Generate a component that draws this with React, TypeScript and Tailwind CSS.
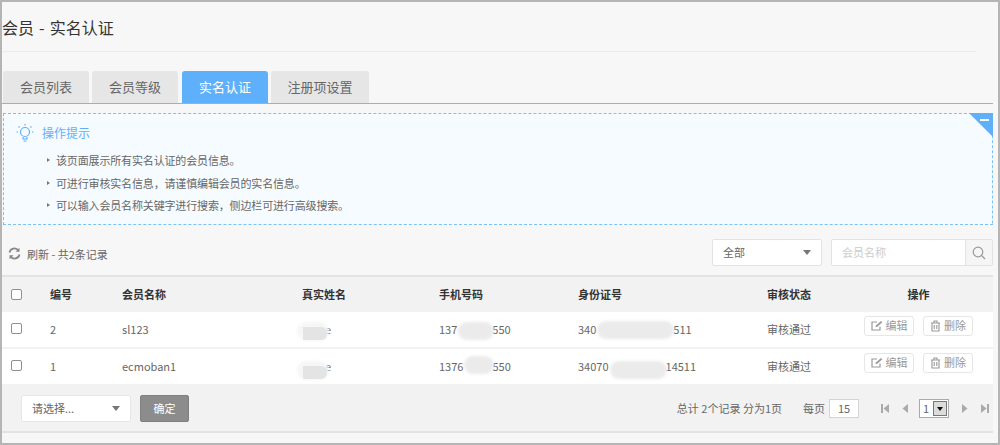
const font = { fontFamily: '"Noto Sans CJK SC", "Noto Sans", sans-serif' };

function Mask({ className }: { className: string }) {
  return <span className={`absolute rounded-full bg-[#ebebeb] blur-[1.5px] ${className}`} />;
}

function NameMask({ top }: { top: string }) {
  return (
    <span className={`absolute -left-[5px] w-[32px] h-[19px] ${top}`}>
      <span className="absolute inset-0 rounded-full bg-[#f6f6f6] blur-[1.5px]" />
      <span className="absolute left-[6px] top-[5px] w-[24px] h-[13px] rounded-r-[6px] bg-[#e4e4e4] blur-[0.5px]" />
    </span>
  );
}

function Cb() {
  return <span className="block w-[11px] h-[11px] rounded-[2px] border border-[#8f8f8f] bg-white" />;
}

function EditIcon() {
  return (
    <svg width="12" height="11" viewBox="0 0 12 11" fill="none" stroke="#999" strokeWidth="1.2">
      <path d="M9 6.5V10H1V2h5" />
      <path d="M4.5 7.2l.4-1.8L10 .9l1.3 1.3-5 4.6z" fill="#999" stroke="none" />
    </svg>
  );
}

function TrashIcon() {
  return (
    <svg width="11" height="12" viewBox="0 0 11 12" fill="none" stroke="#999" strokeWidth="1.1">
      <path d="M1 3h9M4 3V1h3v2M2 3v8h7V3M4.2 5v4M6.8 5v4" />
    </svg>
  );
}

function OpBtn({ icon, label }: { icon: React.ReactNode; label: string }) {
  return (
    <span className="flex items-center justify-center gap-[3px] w-[50px] h-[20px] bg-white border border-[#e6e6e6] rounded-[3px] text-[11px] text-[#999]">
      {icon}
      {label}
    </span>
  );
}

function Row({ id, name, blurName, phone, card }: { id: string; name: string; blurName: React.ReactNode; phone: React.ReactNode; card: React.ReactNode }) {
  return (
    <div className="grid grid-cols-[48px_72px_180px_137px_139px_189px_97px_1fr] items-center h-[37px] bg-white border-b-2 border-[#f2f2f2] text-[11px] text-[#666]">
      <div className="pl-[9px] -mt-[3px]"><Cb /></div>
      <div>{id}</div>
      <div>{name}</div>
      <div className="relative">{blurName}</div>
      <div className="relative">{phone}</div>
      <div className="relative">{card}</div>
      <div>审核通过</div>
      <div className="flex gap-[9px] -mt-[8px]">
        <OpBtn icon={<EditIcon />} label="编辑" />
        <OpBtn icon={<TrashIcon />} label="删除" />
      </div>
    </div>
  );
}

function Tri({ d }: { d: string }) {
  return (
    <svg className="block" width="11" height="11" viewBox="0 0 11 11" fill="#aaa"><path d={d} /></svg>
  );
}

const tips = [
  "该页面展示所有实名认证的会员信息。",
  "可进行审核实名信息，请谨慎编辑会员的实名信息。",
  "可以输入会员名称关键字进行搜索，侧边栏可进行高级搜索。",
];

export default function App() {
  return (
    <div style={font} className="w-[1000px] h-[445px] overflow-hidden border-2 border-[#b5b5b5] bg-[#f7f7f7] text-[#666]">
      <div className="w-[974px] h-[50px] border-b border-[#ebebeb] flex items-center">
        <h1 className="text-[16px] text-[#333] whitespace-pre [word-spacing:1.5px]">会员 - 实名认证</h1>
      </div>
      <div className="w-[991px] mt-[19px] h-[33px] flex gap-[3px] pl-[1px] border-b border-[#7db9ee]">
        {["会员列表", "会员等级", "实名认证", "注册项设置"].map((t, i) => (
          <div
            key={t}
            className={`h-[32px] flex items-center justify-center rounded-t-[3px] text-[13px] ${
              i === 2 ? "bg-[#5fb0fb] text-white ml-[1px]" : "bg-[#e6e6e6] text-[#666]"
            } ${i === 3 ? "w-[98px]" : "w-[86px]"}`}
          >
            {t}
          </div>
        ))}
      </div>
      <div className="relative ml-[1px] w-[990px] h-[112px] mt-[9px] bg-[#f6fbff] border border-dashed border-[#7cc0f8] rounded-tr-[3px] pl-[12px] pt-[9px]">
        <div className="absolute -right-[1px] -top-[1px] w-0 h-0 border-l-[24px] border-l-transparent border-t-[24px] border-t-[#5fb0fb]" />
        <div className="absolute right-[3px] top-[5px] w-[9px] h-[2px] bg-white" />
        <div className="flex items-center gap-[8px] text-[12px] text-[#5fb0fb] h-[20px]">
          <svg width="18" height="20" viewBox="0 0 18 20" fill="none" stroke="#5fb0fb" strokeWidth="1.2">
            <circle cx="9" cy="9" r="4.5" />
            <path d="M7 14v2h4v-2M7.5 18h3M9 1v1.5M2.5 3.5l1 1M15.5 3.5l-1 1M0.5 9H2M16 9h1.5" />
          </svg>
          操作提示
        </div>
        <ul className="mt-[6px] text-[11px] text-[#666] tracking-[-0.15px]">
          {tips.map((t) => (
            <li key={t} className="flex items-center h-[22.5px] pl-[31px] relative">
              <span className="absolute left-[31px] top-[9px] w-0 h-0 border-l-[3px] border-l-[#777] border-y-[2.5px] border-y-transparent" />
              <span className="ml-[9px]">{t}</span>
            </li>
          ))}
        </ul>
      </div>
      <div className="w-[991px] h-[27px] mt-[14px] flex items-center text-[11px]">
        <svg className="ml-[6px] mt-[2px]" width="13" height="13" viewBox="0 0 13 13" fill="none" stroke="#888" strokeWidth="1.8">
          <path d="M1.5 5.5A5 5 0 0 1 10.5 3.5M11.5 7.5A5 5 0 0 1 2.5 9.5" />
          <path d="M11.5 0.8v4h-4zM1.5 12.2v-4h4z" fill="#888" stroke="none" />
        </svg>
        <span className="ml-[6px] mt-[4px]">刷新 - 共2条记录</span>
        <div className="ml-auto flex items-center justify-between w-[110px] h-[27px] px-[10px] bg-white border border-[#e3e3e3] rounded-[2px]">
          全部
          <span className="w-0 h-0 border-x-[4px] border-x-transparent border-t-[5px] border-t-[#777]" />
        </div>
        <div className="ml-[9px] flex w-[162px] h-[27px] bg-white border border-[#e3e3e3] rounded-[2px]">
          <span className="flex-1 flex items-center pl-[10px] text-[#ccc]">会员名称</span>
          <span className="w-[27px] flex items-center justify-center bg-[#f5f5f5] border-l border-[#e3e3e3]">
            <svg width="14" height="14" viewBox="0 0 14 14" fill="none" stroke="#999" strokeWidth="1.2">
              <circle cx="6" cy="6" r="4.8" />
              <path d="M9.5 9.5L13 13" />
            </svg>
          </span>
        </div>
      </div>
      <div className="w-[991px] mt-[9px]">
        <div className="grid grid-cols-[48px_72px_180px_137px_139px_189px_97px_1fr] items-center h-[37px] bg-[#f2f2f2] border-t-2 border-[#e3e3e3] text-[11px] font-bold text-[#333]">
          <div className="pl-[9px]"><Cb /></div>
          <div>编号</div>
          <div>会员名称</div>
          <div>真实姓名</div>
          <div>手机号码</div>
          <div>身份证号</div>
          <div>审核状态</div>
          <div className="text-center pr-[20px]">操作</div>
        </div>
        <Row
          id="2"
          name="sl123"
          blurName={<><span className="pl-[23px]">e</span><NameMask top="top-[1px]" /></>}
          phone={<>137<span className="ml-[35px]">550</span><Mask className="left-[19px] top-[1px] w-[36px] h-[18px]" /></>}
          card={<>340<span className="ml-[77px]">511</span><Mask className="left-[19px] top-0 w-[77px] h-[18px]" /></>}
        />
        <Row
          id="1"
          name="ecmoban1"
          blurName={<><span className="pl-[23px]">e</span><NameMask top="top-[3px]" /></>}
          phone={<>1376<span className="ml-[29px]">550</span><Mask className="left-[25px] -top-[2px] w-[30px] h-[18px]" /></>}
          card={<>34070<span className="ml-[57px]">14511</span><Mask className="left-[32px] top-[3px] w-[57px] h-[18px]" /></>}
        />
        <div className="h-[47px] flex items-center bg-[#f2f2f2] border-b-2 border-[#e3e3e3] text-[11px]">
          <div className="ml-[19px] flex items-center justify-between w-[110px] h-[27px] px-[10px] bg-white border border-[#e6e6e6] rounded-[2px]">
            请选择...
            <span className="w-0 h-0 border-x-[4px] border-x-transparent border-t-[5px] border-t-[#777]" />
          </div>
          <div className="ml-[9px] w-[49px] h-[27px] flex items-center justify-center bg-[#8c8c8c] text-white border border-[#7f7f7f] rounded-[2px]">确定</div>
          <span className="ml-auto">总计 2个记录 分为1页</span>
          <span className="ml-[21px]">每页</span>
          <span className="ml-[4px] w-[30px] h-[19px] flex items-center justify-center bg-white border border-[#d5d5d5]">15</span>
          <div className="ml-[21px] flex items-center">
            <Tri d="M1 1h2v9H1zM9 1v9L3.5 5.5z" />
            <span className="ml-[9px]"><Tri d="M8 1v9L2.5 5.5z" /></span>
            <span className="ml-[8px] flex items-center w-[30px] h-[19px] bg-white border border-[#aaa]">
              <span className="flex-1 pl-[3px]">1</span>
              <span className="w-[14px] h-[15px] mr-[1px] flex items-center justify-center bg-[#dcdcdc] border border-[#777]">
                <span className="w-0 h-0 border-x-[3px] border-x-transparent border-t-[4px] border-t-[#111]" />
              </span>
            </span>
            <span className="ml-[10px]"><Tri d="M3 1v9L8.5 5.5z" /></span>
            <span className="ml-[9px]"><Tri d="M2 1v9L7.5 5.5zM8 1h2v9H8z" /></span>
          </div>
          <span className="w-[3px]" />
        </div>
      </div>
    </div>
  );
}
